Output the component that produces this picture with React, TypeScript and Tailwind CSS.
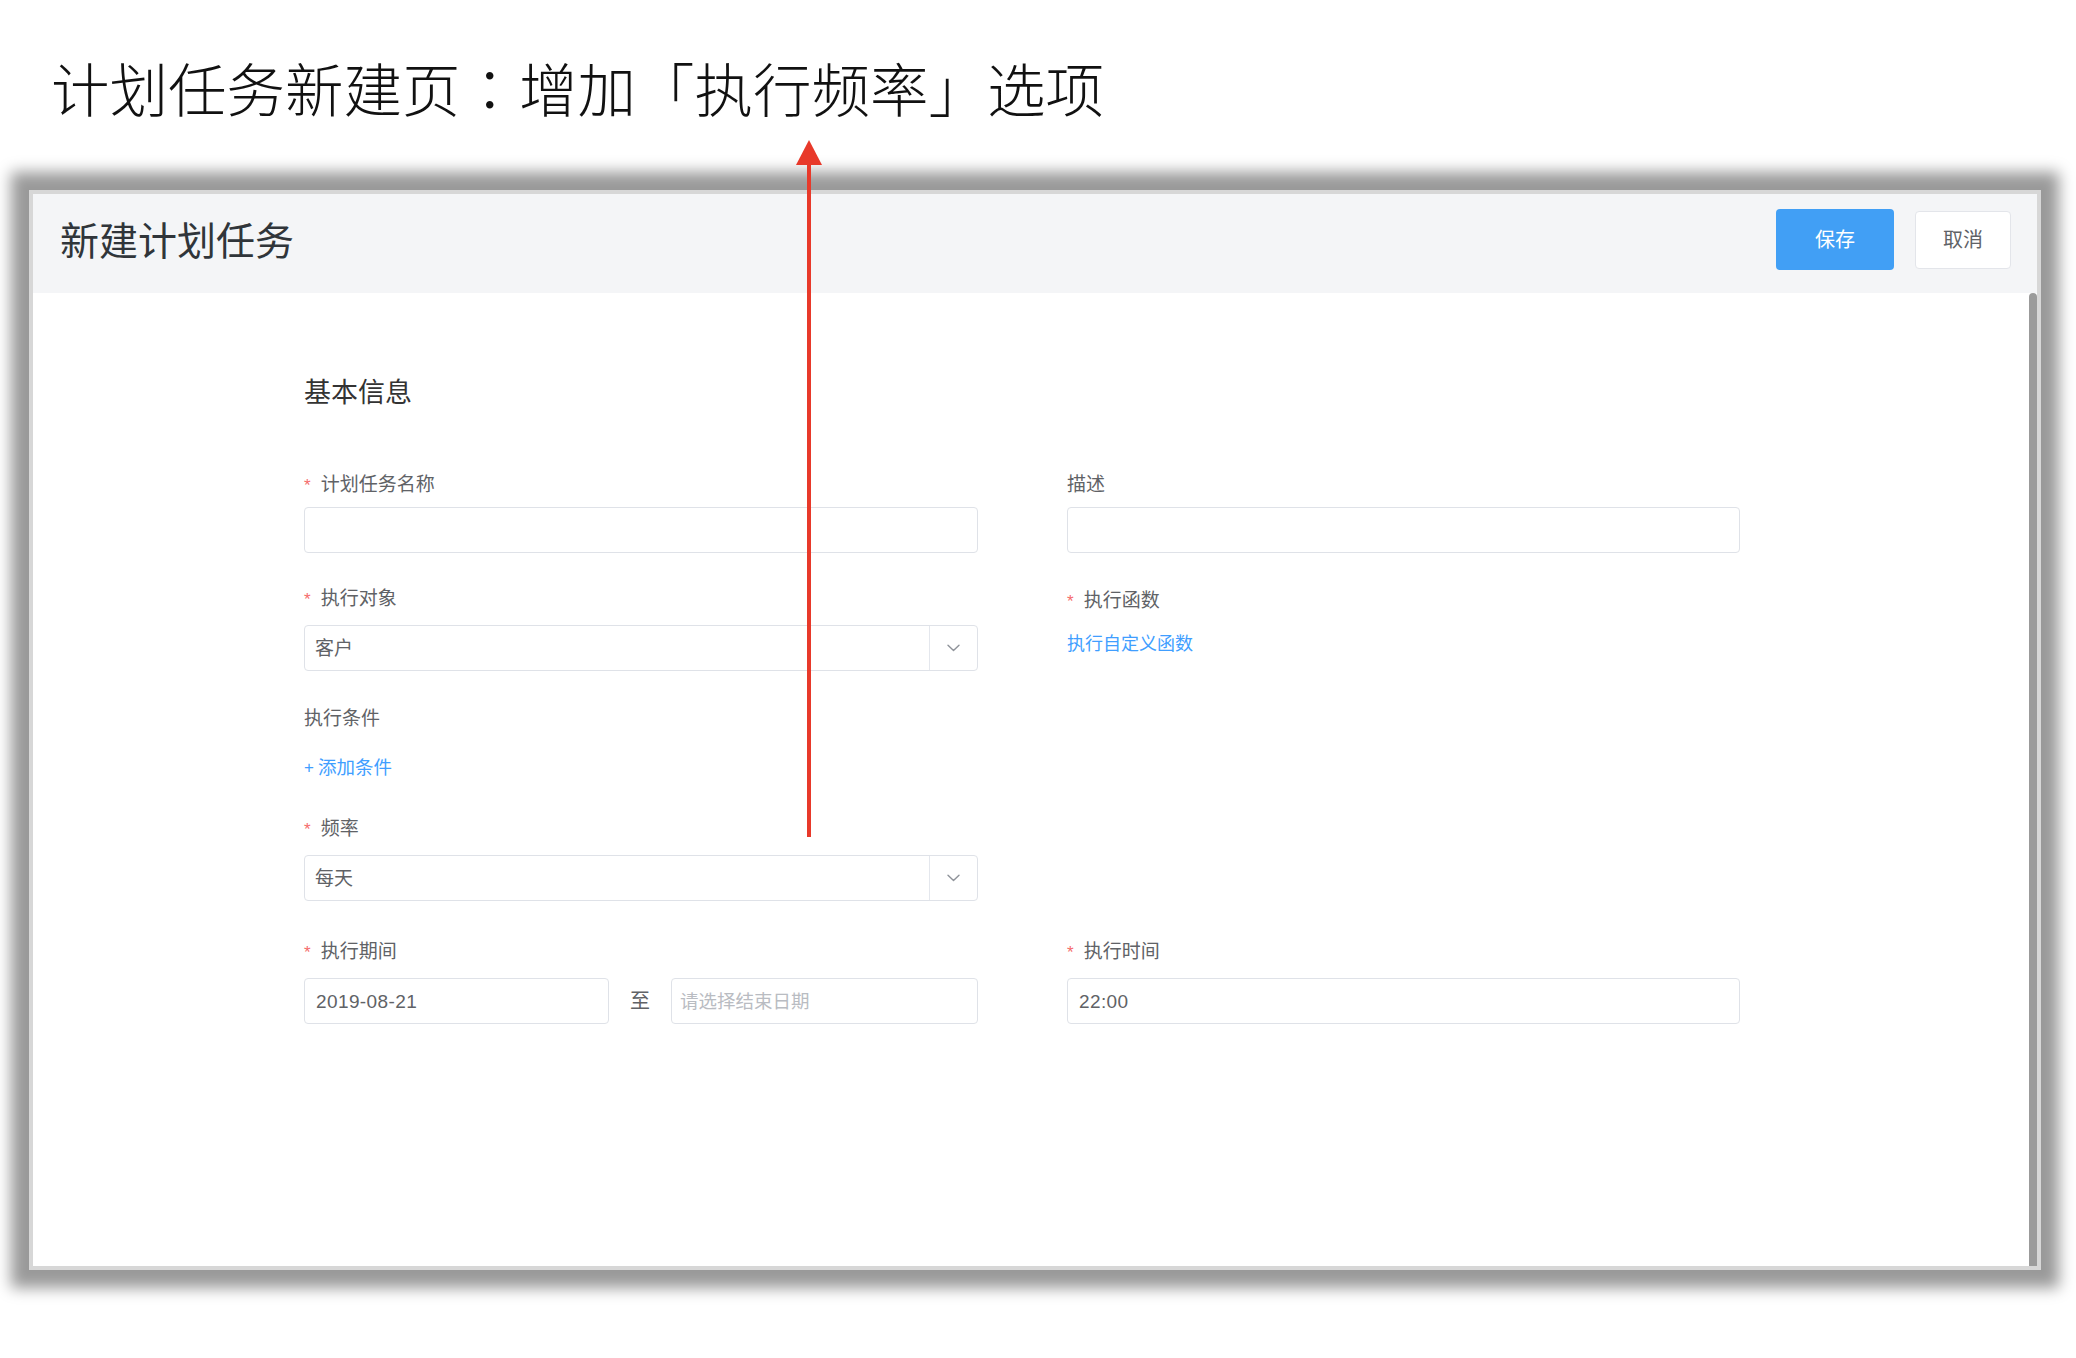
import React from "react";

function Label({ text, required }: { text: string; required?: boolean }) {
  return (
    <div className="h-[20px] text-[19px] leading-[20px] text-[#606266] whitespace-nowrap">
      {required && <span className="text-[17px] text-[#f56c6c] mr-[10px]">*</span>}
      <span>{text}</span>
    </div>
  );
}

function Chevron() {
  return (
    <svg width="13" height="8" viewBox="0 0 13 8">
      <path d="M1 1.2 L6.5 6.6 L12 1.2" fill="none" stroke="#8f939a" strokeWidth="1.4" strokeLinecap="round" strokeLinejoin="round" />
    </svg>
  );
}

function Select({ value }: { value: string }) {
  return (
    <div className="flex h-[46px] w-full border border-[#dfe2e8] rounded-[4px] bg-white">
      <div className="flex-1 flex items-center pl-[10px] pt-[3px] text-[19px] text-[#606266]">{value}</div>
      <div className="w-[48px] border-l border-[#e4e7ed] flex items-center justify-center">
        <Chevron />
      </div>
    </div>
  );
}

function Input({ value, placeholder, className }: { value?: string; placeholder?: string; className?: string }) {
  return (
    <div className={"flex items-center pt-[2px] h-[46px] border border-[#dfe2e8] rounded-[4px] bg-white " + (className ?? "w-full")}>
      {value && <span className="pl-[11px] text-[19px] tracking-[0.4px] text-[#606266]">{value}</span>}
      {placeholder && <span className="pl-[8px] text-[18.5px] text-[#b9bcc2]">{placeholder}</span>}
    </div>
  );
}

export default function App() {
  return (
    <div className="relative w-[2076px] h-[1358px] bg-white overflow-hidden font-['Liberation_Sans','Noto_Sans_CJK_SC',sans-serif]">
      <div className="h-[190px] pl-[51px] pt-[57px]">
        <div className="text-[58.5px] leading-[60px] text-[#111111] font-light whitespace-nowrap">
          计划任务新建页<span className="font-['Noto_Sans_CJK_JP',sans-serif]">：</span>增加「执行频率」选项
        </div>
      </div>

      <div className="ml-[29px] w-[2012px] h-[1080px] border-4 border-[#d7d7d7] shadow-[0_0_14px_18px_rgba(0,0,0,0.4)] flex flex-col bg-white">
        <div className="h-[99px] bg-[#f4f5f7] flex items-start justify-between pl-[27px] pr-[26px]">
          <div className="mt-[28px] text-[39px] leading-[40px] text-[#30353a] whitespace-nowrap">新建计划任务</div>
          <div className="flex items-start gap-[21px]">
            <div className="mt-[15px] w-[118px] h-[61px] rounded-[4px] bg-[#419ff5] flex items-center justify-center text-[20px] text-white">保存</div>
            <div className="mt-[17px] w-[96px] h-[58px] rounded-[4px] bg-white border border-[#e3e5ea] flex items-center justify-center text-[20px] text-[#606266]">取消</div>
          </div>
        </div>

        <div className="flex flex-1">
          <div className="flex-1 pl-[271px]">
            <div className="mt-[86px] h-[28px] text-[27px] leading-[28px] text-[#333333]">基本信息</div>

            <div className="mt-[68px] grid grid-cols-[674px_673px] gap-x-[89px]">
              <div>
                <Label text="计划任务名称" required />
                <div className="mt-[12px]"><Input /></div>
              </div>
              <div>
                <Label text="描述" />
                <div className="mt-[12px]"><Input /></div>
              </div>
            </div>

            <div className="mt-[36px] grid grid-cols-[674px_673px] gap-x-[89px]">
              <div>
                <Label text="执行对象" required />
                <div className="mt-[16px]"><Select value="客户" /></div>
              </div>
              <div className="pt-[2px]">
                <Label text="执行函数" required />
                <div className="mt-[23px] h-[20px] text-[18px] leading-[20px] text-[#409eff]">执行自定义函数</div>
              </div>
            </div>

            <div className="mt-[38px] w-[674px]">
              <Label text="执行条件" />
              <div className="mt-[29px] h-[20px] flex items-center text-[#409eff]">
                <span className="text-[17px] leading-[20px]">+</span>
                <span className="ml-[4px] text-[18.5px] leading-[20px]">添加条件</span>
              </div>
              <div className="mt-[41px]"><Label text="频率" required /></div>
              <div className="mt-[16px]"><Select value="每天" /></div>
            </div>

            <div className="mt-[41px] grid grid-cols-[674px_673px] gap-x-[89px]">
              <div>
                <Label text="执行期间" required />
                <div className="mt-[16px] flex items-center">
                  <Input value="2019-08-21" className="w-[305px]" />
                  <div className="flex-1 text-center text-[20px] text-[#606266]">至</div>
                  <Input placeholder="请选择结束日期" className="w-[307px]" />
                </div>
              </div>
              <div>
                <Label text="执行时间" required />
                <div className="mt-[16px]"><Input value="22:00" /></div>
              </div>
            </div>
          </div>
          <div className="w-[8px] bg-[#9b9b9b] rounded-t-[4px]" />
        </div>
      </div>

      <svg className="absolute left-[796px] top-[140px]" width="26" height="697" viewBox="0 0 26 697">
        <polygon points="13,0 0,25 26,25" fill="#e8392a" />
        <rect x="11" y="24" width="4" height="673" fill="#e8392a" />
      </svg>
    </div>
  );
}
